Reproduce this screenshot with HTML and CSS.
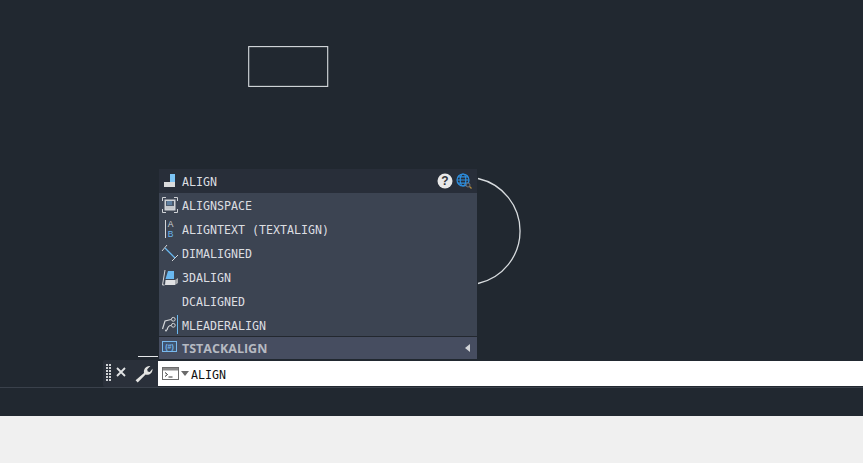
FILE: index.html
```html
<!DOCTYPE html>
<html lang="en">
<head>
<meta charset="utf-8">
<title>ALIGN command</title>
<link rel="stylesheet" href="styles.css">
</head>
<body>
<main class="app">
  <section class="viewport">
    <svg class="drawing" width="863" height="388" viewBox="0 0 863 388">
      <rect x="248.700" y="46.600" width="79" height="39.800" fill="none" stroke="#d8dcdf" stroke-width="1.100"/>
      <path d="M478 178.500 A 53.800 53.800 0 0 1 478 283.500" fill="none" stroke="#d8dcdf" stroke-width="1.300"/>
      <path d="M138 356.500H158" stroke="#e6e8ea" stroke-width="1"/>
    </svg>
    <div class="menu">
      <div class="row row-head">
        <svg class="icon" width="18" height="18" viewBox="0 0 18 18"><rect x="9" y="2" width="5" height="8" fill="#7cc4f5"/><rect x="3" y="10" width="11" height="5" fill="#d9dadb"/></svg>
        <span class="label">ALIGN</span>
        <span class="head-tools">
          <svg width="16" height="16" viewBox="0 0 16 16"><circle cx="8" cy="8" r="7.500" fill="#e8e8e8"/><text x="8" y="12" text-anchor="middle" class="qmark">?</text></svg>
          <svg width="17" height="17" viewBox="0 0 17 17"><g fill="none" stroke="#2d8fe0" stroke-width="1.200"><circle cx="7" cy="7" r="6"/><ellipse cx="7" cy="7" rx="2.800" ry="6"/><path d="M1 7h12M2 3.800h10M2 10.200h10"/></g><circle cx="12" cy="12" r="2" fill="#2b3038" stroke="#6f7680"/><path d="M13.500 13.500l2 2" stroke="#b08a3c" stroke-width="1.200"/></svg>
        </span>
      </div>
      <div class="row">
        <svg class="icon" width="18" height="18" viewBox="0 0 18 18"><path d="M1.500 5V1.500H5M13 1.500h3.500V5M1.500 13v3.500H5M13 16.500h3.500V13" fill="none" stroke="#cfd2d6"/><rect x="3.500" y="3.500" width="11" height="11" fill="#cfd2d6"/><rect x="5" y="5" width="8" height="8" fill="#4d5a6b"/><rect x="6" y="5" width="5" height="4" fill="#5f7f9f"/><rect x="5" y="10" width="8" height="3" fill="#c4c7cb"/></svg>
        <span class="label">ALIGNSPACE</span>
      </div>
      <div class="row">
        <svg class="icon" width="18" height="18" viewBox="0 0 18 18"><path d="M4.500 0v18" stroke="#d4d6d9"/><text x="9.500" y="7" text-anchor="middle" class="glyph glyph-a">A</text><text x="9.500" y="17" text-anchor="middle" class="glyph glyph-b">B</text></svg>
        <span class="label">ALIGNTEXT (TEXTALIGN)</span>
      </div>
      <div class="row">
        <svg class="icon" width="18" height="18" viewBox="0 0 18 18"><path d="M1 7l5-6M11 17l6-6" stroke="#d4d6d9" fill="none"/><path d="M4 4l10 10" stroke="#69b8f0" stroke-width="1.300"/></svg>
        <span class="label">DIMALIGNED</span>
      </div>
      <div class="row">
        <svg class="icon" width="18" height="18" viewBox="0 0 18 18"><path d="M4 2L1.500 17h2" stroke="#d4d6d9" fill="none"/><path d="M7 3h6v8H4.500z" fill="#69b8f0"/><path d="M4.500 12H14v5H4z" fill="#e0e1e3"/><path d="M14 12l3-2v5l-3 2z" fill="#a9acb0"/></svg>
        <span class="label">3DALIGN</span>
      </div>
      <div class="row">
        <span class="icon"></span>
        <span class="label">DCALIGNED</span>
      </div>
      <div class="row">
        <svg class="icon" width="18" height="18" viewBox="0 0 18 18"><path d="M1.500 13L4 5l6-1.500M6 14c1-4 2-4.500 4-4.500" fill="none" stroke="#d4d6d9" stroke-width="1.200"/><circle cx="12.300" cy="3.300" r="1.900" fill="none" stroke="#d4d6d9"/><circle cx="12.300" cy="9.300" r="1.900" fill="none" stroke="#d4d6d9"/><circle cx="5" cy="14.500" r="1" fill="#d4d6d9"/><path d="M16.500 -1v19" stroke="#69b8f0"/></svg>
        <span class="label">MLEADERALIGN</span>
      </div>
      <div class="row row-foot">
        <svg class="icon" width="18" height="18" viewBox="0 0 18 18"><rect x="1.500" y="2.500" width="14" height="10" fill="#3f5470" stroke="#79b9ee"/><text x="8.500" y="10" text-anchor="middle" class="tiny">(#)</text></svg>
        <span class="label label-foot">TSTACKALIGN</span>
        <span class="arrow"></span>
      </div>
    </div>
  </section>
  <section class="cmdline">
    <div class="cmd-tools">
      <span class="grip"></span>
      <svg class="close" width="12" height="12" viewBox="0 0 12 12"><path d="M2 2l8 8M10 2l-8 8" stroke="#e2e4e6" stroke-width="1.800"/></svg>
      <svg class="wrench" width="19" height="19" viewBox="0 0 18 18"><path d="M1.500 15.500L9.500 8.500C8.800 5.500 11 1.500 15.500 2L12.500 5 13 7 15 7.500 17.500 4.500C18 9 13.500 11 11 10L3.500 17.500z" fill="#e4e4e2"/></svg>
    </div>
    <div class="cmd-input">
      <svg width="17" height="13" viewBox="0 0 17 13"><rect x="0.500" y="0.500" width="16" height="12" fill="#fff" stroke="#6c6c6c"/><rect x="1" y="1" width="15" height="2.500" fill="#8a8a8a"/><path d="M3 5.500l2.500 2-2.500 2M6.500 10h4" fill="none" stroke="#333"/></svg>
      <span class="caret"></span>
      <span class="cmd-text">ALIGN</span>
    </div>
  </section>
  <section class="status"></section>
  <footer class="bottom"></footer>
</main>
</body>
</html>
```
FILE: styles.css
```css
* { box-sizing: border-box; }
html, body { margin: 0; height: 100%; }
body { background: #212830; overflow: hidden; }
.app { display: flex; flex-direction: column; width: 863px; height: 463px; }
.viewport { position: relative; height: 360px; flex: none; }
.drawing { position: absolute; left: 0; top: 0; }
.menu { position: absolute; left: 159px; top: 169px; width: 318px; background: #3c4452; font-family: "DejaVu Sans Mono", monospace; color: #dcdee1; }
.row { display: flex; align-items: center; height: 24px; padding-left: 2px; }
.row-head { background: #282e39; }
.icon { flex: none; width: 18px; height: 18px; margin-right: 3px; display: block; overflow: visible; }
.label { white-space: pre; font-size: 11.640px; position: relative; top: 1px; }
.head-tools { margin-left: auto; display: flex; align-items: center; gap: 3px; padding-right: 4px; }
.qmark { font: bold 12px "Liberation Sans", sans-serif; fill: #30343a; }
.glyph { font: 8.500px "Liberation Sans", sans-serif; }
.glyph-a { fill: #d4d6d9; }
.glyph-b { fill: #69b8f0; }
.tiny { font: bold 7px "Liberation Sans", sans-serif; fill: #79b9ee; }
.row-foot { background: #464d60; border-top: 1px solid #23282f; height: 23px; margin-top: -1px; }
.label-foot { font: bold 12.500px "Open Sans", sans-serif; color: #b6bac2; top: 0; }
.arrow { margin-left: auto; margin-right: 7px; border-style: solid; border-width: 4px 5px 4px 0; border-color: transparent #d2d4d8 transparent transparent; }
.cmdline { display: flex; flex: none; height: 27px; padding-left: 103px; }
.cmd-tools { display: flex; align-items: center; width: 55px; background: #2a303a; padding-left: 3px; border-radius: 2px 0 0 2px; }
.grip { width: 5px; height: 17px; margin-bottom: 2px; background-image: linear-gradient(to right, transparent 2px, #2a303a 2px 3px, transparent 3px), repeating-linear-gradient(#cfd2d5 0 2px, transparent 2px 3px); }
.close { margin-left: 4px; margin-bottom: 3px; }
.wrench { margin-left: 7px; margin-bottom: 1px; }
.cmd-input { display: flex; align-items: center; flex: 1; background: #fff; padding-left: 4px; margin: 1px 0; }
.caret { margin: 0 2px 0 2px; border-style: solid; border-width: 5px 4px 0 4px; border-color: #6a6a6a transparent transparent transparent; }
.cmd-text { font: 11.640px "DejaVu Sans Mono", monospace; color: #111; position: relative; top: 1px; }
.status { flex: none; height: 29px; background: #212830; border-top: 1px solid #3a414b; }
.bottom { flex: 1; background: #f0f0f0; }
```
